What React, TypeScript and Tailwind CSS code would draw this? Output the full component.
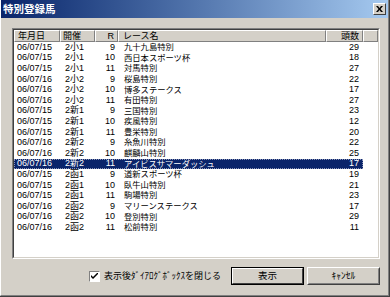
import React from "react";

// 特別登録馬 dialog (Win2000 classic look). List view + close-after-show checkbox + buttons.

type Row = [string, string, string, string, string];

const rows: Row[] = [
  ["06/07/15", "2小1", "9", "九十九島特別", "29"],
  ["06/07/15", "2小1", "10", "西日本スポーツ杯", "18"],
  ["06/07/15", "2小1", "11", "対馬特別", "27"],
  ["06/07/16", "2小2", "9", "桜島特別", "22"],
  ["06/07/16", "2小2", "10", "博多ステークス", "17"],
  ["06/07/16", "2小2", "11", "有田特別", "27"],
  ["06/07/15", "2新1", "9", "三国特別", "23"],
  ["06/07/15", "2新1", "10", "疾風特別", "12"],
  ["06/07/15", "2新1", "11", "豊栄特別", "20"],
  ["06/07/16", "2新2", "9", "糸魚川特別", "22"],
  ["06/07/16", "2新2", "10", "麒麟山特別", "25"],
  ["06/07/16", "2新2", "11", "アイビスサマーダッシュ", "17"],
  ["06/07/15", "2函1", "9", "道新スポーツ杯", "19"],
  ["06/07/15", "2函1", "10", "臥牛山特別", "21"],
  ["06/07/15", "2函1", "11", "駒場特別", "23"],
  ["06/07/16", "2函2", "9", "マリーンステークス", "17"],
  ["06/07/16", "2函2", "10", "登別特別", "29"],
  ["06/07/16", "2函2", "11", "松前特別", "11"],
];

const SELECTED = 11;

const headCell =
  "flex h-full items-center border-t border-l border-white border-r border-b border-r-[#808080] border-b-[#808080]";

export default function App() {
  return (
    <div className="h-[297px] w-[390px] overflow-hidden bg-[#d4d0c8] font-['Liberation_Sans','Noto_Sans_CJK_JP',sans-serif] text-black">
      <div className="flex h-full w-full flex-col border-r border-b border-[#404040]">
        <div className="flex h-full w-full flex-col border-l border-white border-r border-b border-r-[#808080] border-b-[#808080]">
          {/* title bar */}
          <div className="flex h-[18px] shrink-0 items-center justify-between bg-gradient-to-r from-[#0a246a] to-[#a6caf0] pl-[2px] pr-[2px]">
            <span className="text-[10.5px] font-bold leading-none text-white">特別登録馬</span>
            <div className="flex h-[12px] w-[13px] items-center justify-center border border-t-white border-l-white border-r-[#404040] border-b-[#404040] bg-[#d4d0c8]">
              <svg width="7" height="6" viewBox="0 0 7 6">
                <path d="M0 0h2l1.5 2L5 0h2L4.5 3 7 6H5L3.5 4 2 6H0l2.5-3z" fill="#000" />
              </svg>
            </div>
          </div>

          <div className="flex flex-1 flex-col pl-[11px] pr-[8px] pt-[10px]">
            {/* list view */}
            <div className="h-[231px] border border-t-[#808080] border-l-[#808080] border-r-white border-b-white">
              <div className="flex h-full flex-col border border-t-[#404040] border-l-[#404040] border-r-[#d4d0c8] border-b-[#d4d0c8] bg-white">
                <div className="flex h-[12px] shrink-0 bg-[#d4d0c8] text-[9px] leading-none">
                  <div className={`${headCell} w-[46px] pl-[3px]`}>年月日</div>
                  <div className={`${headCell} w-[35px] pl-[2px]`}>開催</div>
                  <div className={`${headCell} w-[23px] justify-end pr-[3px]`}>R</div>
                  <div className={`${headCell} w-[208px] pl-[4px]`}>レース名</div>
                  <div className={`${headCell} w-[37px] justify-end pr-[3px]`}>頭数</div>
                  <div className={`${headCell} flex-1`} />
                </div>
                <div className="flex flex-col">
                  {rows.map((r, i) => {
                    const sel = i === SELECTED;
                    return (
                      <div
                        key={i}
                        className={`flex h-[10.6px] items-center text-[9px] leading-none ${
                          sel ? "bg-[#0a246a] text-white outline-1 outline-dotted -outline-offset-1 outline-[#8a94b8]" : ""
                        }`}
                        style={{ width: 349 }}
                      >
                        <span className="w-[46px] pl-[3px]">{r[0]}</span>
                        <span className="w-[35px] pl-[5px]">{r[1]}</span>
                        <span className="w-[23px] pr-[3px] text-right">{r[2]}</span>
                        <span className="w-[208px] pl-[6px] text-[8.3px]">{r[3]}</span>
                        <span className="w-[37px] pr-[4px] text-right">{r[4]}</span>
                      </div>
                    );
                  })}
                </div>
              </div>
            </div>

            {/* bottom controls */}
            <div className="mt-[8px] flex items-center justify-end">
              <div className="flex items-center">
                <div className="flex h-[11px] w-[11px] items-center justify-center border border-t-[#808080] border-l-[#808080] border-r-white border-b-white bg-white">
                  <svg width="7" height="7" viewBox="0 0 7 7">
                    <path d="M0 2v2l2 2 5-5V-1L2 4z" fill="#000" />
                  </svg>
                </div>
                <span className="ml-[4px] text-[9px] leading-none">表示後ﾀﾞｲｱﾛｸﾞﾎﾞｯｸｽを閉じる</span>
              </div>
              <button className="ml-[10px] h-[18px] w-[73px] border border-black bg-[#d4d0c8] p-0">
                <div className="flex h-full w-full items-center justify-center border border-t-white border-l-white border-r-[#404040] border-b-[#404040] text-[9.5px] leading-none">
                  表示
                </div>
              </button>
              <button className="ml-[3px] h-[18px] w-[73px] border border-t-white border-l-white border-r-[#404040] border-b-[#404040] bg-[#d4d0c8] p-0">
                <div className="flex h-full w-full items-center justify-center border border-transparent border-r-[#808080] border-b-[#808080] text-[9.5px] leading-none">
                  ｷｬﾝｾﾙ
                </div>
              </button>
            </div>
          </div>
        </div>
      </div>
    </div>
  );
}
